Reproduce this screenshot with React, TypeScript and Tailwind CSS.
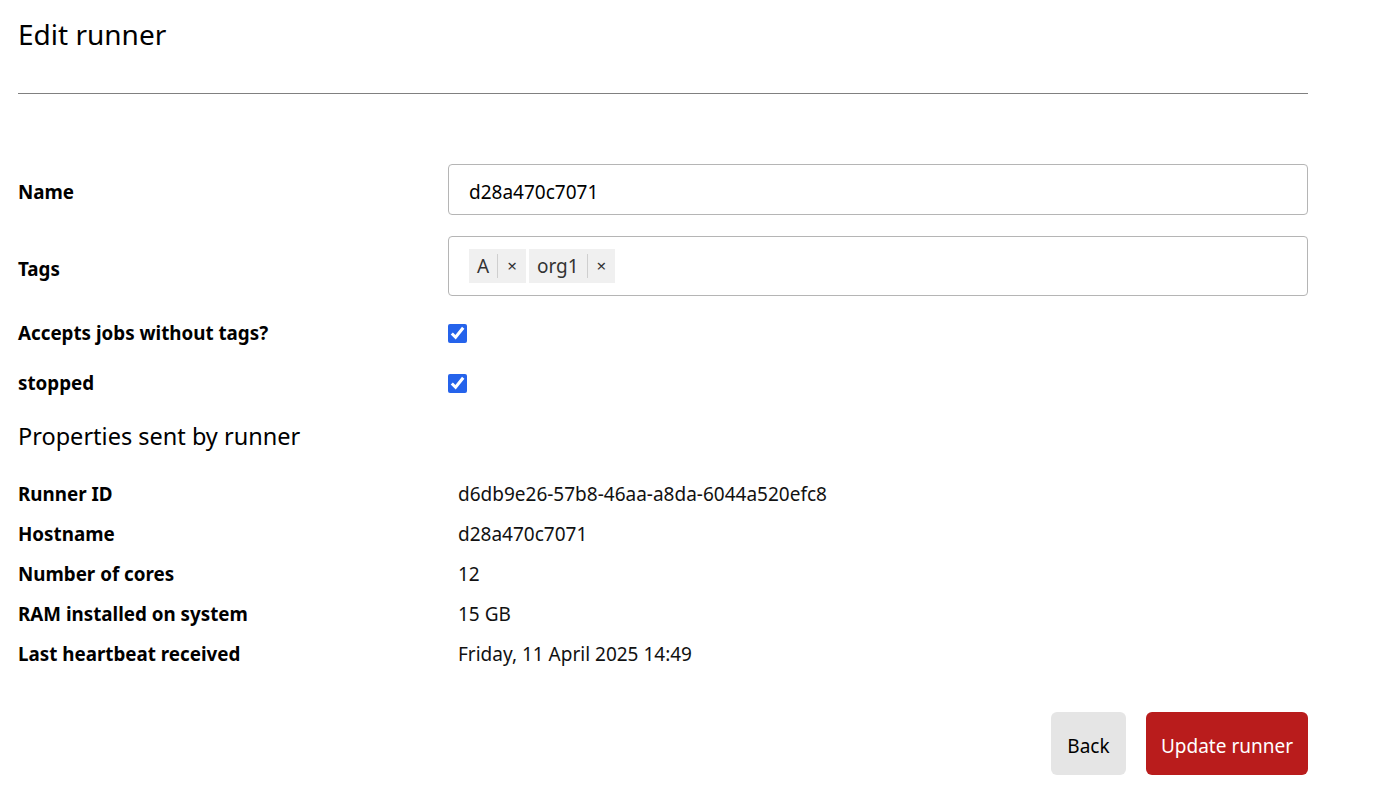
import { useState } from 'react'

interface Property {
  label: string
  value: string
}

const properties: Property[] = [
  { label: 'Runner ID', value: 'd6db9e26-57b8-46aa-a8da-6044a520efc8' },
  { label: 'Hostname', value: 'd28a470c7071' },
  { label: 'Number of cores', value: '12' },
  { label: 'RAM installed on system', value: '15 GB' },
  { label: 'Last heartbeat received', value: 'Friday, 11 April 2025 14:49' },
]

function TagChip({ label, onRemove }: { label: string; onRemove: () => void }) {
  return (
    <span className="flex h-[34px] items-center bg-[#f0f0f0] text-[19px] text-[#333]">
      <span className="border-r border-[#cfcfcf] px-2 leading-[24px]">{label}</span>
      <button type="button" onClick={onRemove} className="px-[9px] text-[17px] leading-[24px] text-[#333]">
        ×
      </button>
    </span>
  )
}

export default function App() {
  const [name, setName] = useState('d28a470c7071')
  const [tags, setTags] = useState(['A', 'org1'])
  const [untagged, setUntagged] = useState(true)
  const [stopped, setStopped] = useState(true)

  return (
    <div className="w-[1308px] pl-[18px] text-black" style={{ fontFamily: '"Noto Sans", "Open Sans", sans-serif' }}>
      <h1 className="pt-[12px] text-[28px] leading-[44px] font-normal">Edit runner</h1>
      <hr className="mt-[37px] border-t border-[#808080]" />

      <form className="mt-[70px]" onSubmit={(e) => e.preventDefault()}>
        {/* Editable fields */}
        <div className="grid grid-cols-[430px_1fr] items-center">
          <label className="pt-[5px] text-[18.8px] leading-[26px] font-bold">Name</label>
          <input
            value={name}
            onChange={(e) => setName(e.target.value)}
            className="h-[51px] rounded border border-[#b5b5b5] px-5 pt-[5px] text-[19px] outline-none"
          />
        </div>

        <div className="mt-[21px] grid grid-cols-[430px_1fr] items-center">
          <label className="pt-[5px] text-[18.8px] leading-[26px] font-bold">Tags</label>
          <div className="flex h-[60px] items-center gap-[3px] rounded border border-[#b5b5b5] px-5">
            {tags.map((tag) => (
              <TagChip key={tag} label={tag} onRemove={() => setTags(tags.filter((t) => t !== tag))} />
            ))}
          </div>
        </div>

        <div className="mt-[24px] grid grid-cols-[430px_1fr] items-center">
          <label className="text-[18.8px] leading-[26px] font-bold">Accepts jobs without tags?</label>
          <input
            type="checkbox"
            checked={untagged}
            onChange={(e) => setUntagged(e.target.checked)}
            className="m-0 h-[19px] w-[19px] accent-[#2563eb]"
          />
        </div>

        <div className="mt-[24px] grid grid-cols-[430px_1fr] items-center">
          <label className="text-[18.8px] leading-[26px] font-bold">stopped</label>
          <input
            type="checkbox"
            checked={stopped}
            onChange={(e) => setStopped(e.target.checked)}
            className="m-0 h-[19px] w-[19px] accent-[#2563eb]"
          />
        </div>

        {/* Read-only properties */}
        <h2 className="mt-[23px] text-[23.5px] leading-[34px] font-normal">Properties sent by runner</h2>

        <div className="mt-[29px] flex flex-col gap-4">
          {properties.map((p) => (
            <div key={p.label} className="grid grid-cols-[430px_1fr] leading-[24px]">
              <span className="text-[18.8px] font-bold">{p.label}</span>
              <span className="pl-[10px] text-[19px] text-[#111]">{p.value}</span>
            </div>
          ))}
        </div>

        {/* Actions */}
        <div className="mt-[46px] flex justify-end gap-5">
          <button type="button" className="h-[63px] w-[75px] rounded-md bg-[#e5e5e5] pt-[5px] text-[19px] text-black">
            Back
          </button>
          <button type="submit" className="h-[63px] w-[162px] rounded-md bg-[#b91c1c] pt-[5px] text-[19px] text-white">
            Update runner
          </button>
        </div>
      </form>
    </div>
  )
}
